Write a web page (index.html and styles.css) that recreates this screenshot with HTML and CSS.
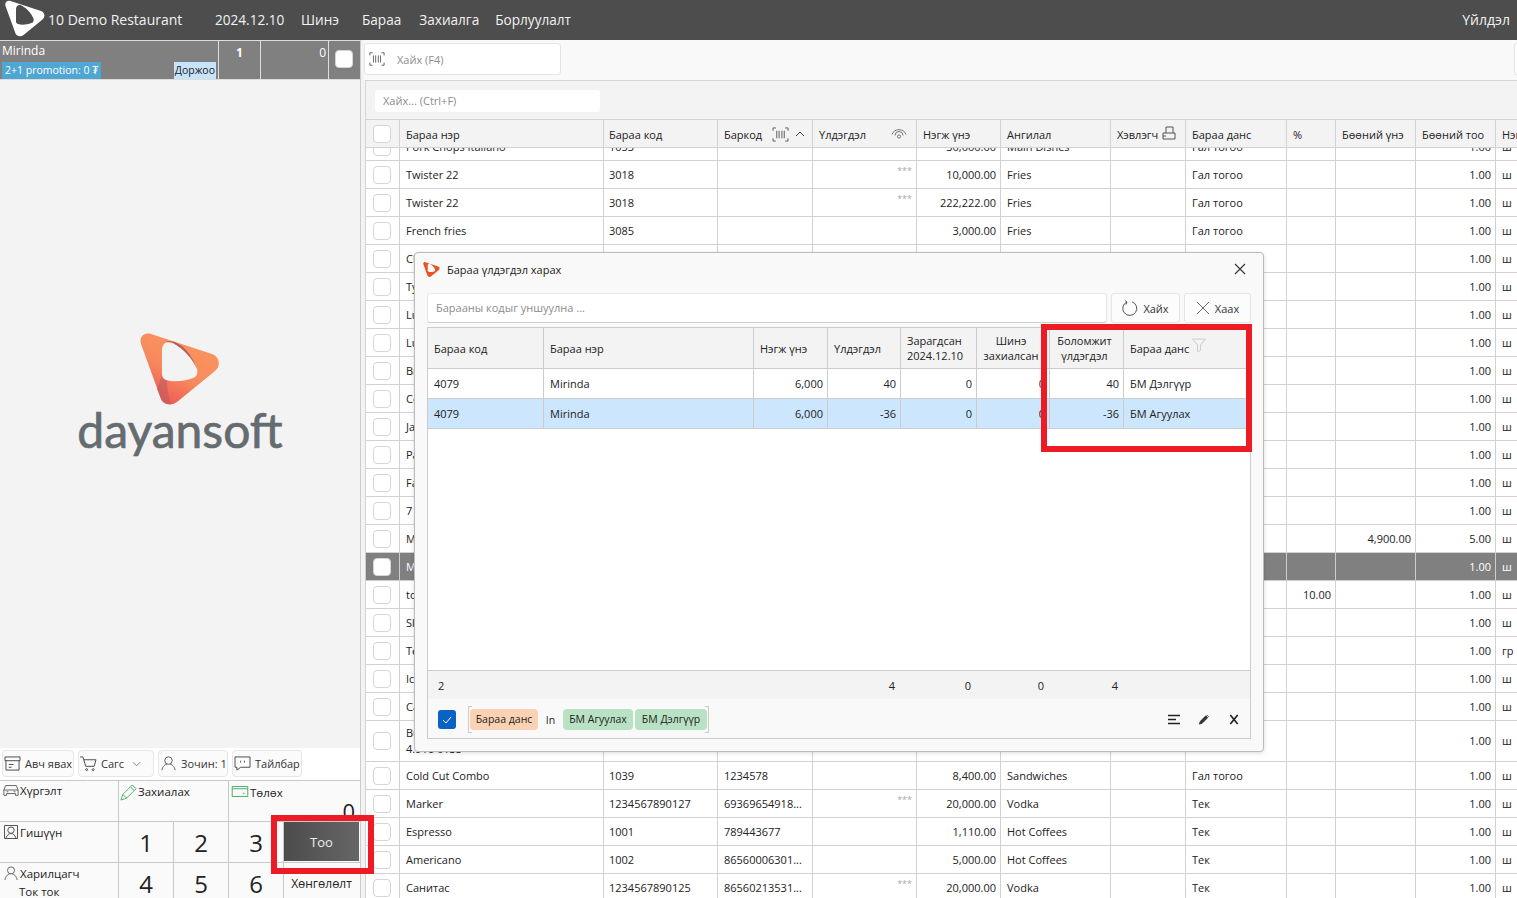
FILE: index.html

```html
<!DOCTYPE html>
<html lang="mn">
<head>
  <meta charset="UTF-8" />
  <meta name="viewport" content="width=device-width, initial-scale=1.0" />
  <title>Dayansoft POS</title>
  <link rel="stylesheet" href="styles.css">
</head>
<body>
  <svg class="defs" width="0" height="0">
    <symbol id="brand" viewBox="0 0 80 72">
      <path fill-rule="evenodd" d="M1 11C-1 4 4-1 11 1L72 21C80 24 81 33 75 38L37 69C32 73 24 72 21 66ZM22 17C22 11 27 7 33 10C44 16 53 26 57 36C58 40 57 44 53 45C43 49 32 49 26 47C23 46 22 44 22 42Z"/>
    </symbol>
    <symbol id="barcode" viewBox="0 0 18 16">
      <path d="M4 1H1V4M14 1H17V4M4 15H1V12M14 15H17V12M5 4V12M7.5 4V12M10.5 4V12M13 4V12" fill="none" stroke="currentColor"/>
    </symbol>
  </svg>

  <header class="topbar">
    <svg class="top-logo"><use href="#brand"/></svg>
    <span class="rest-name">10 Demo Restaurant</span>
    <span class="top-date">2024.12.10</span>
    <nav class="top-nav">
      <a class="n1">Шинэ</a>
      <a class="n2">Бараа</a>
      <a class="n3">Захиалга</a>
      <a>Борлуулалт</a>
    </nav>
    <span class="top-action">Үйлдэл</span>
  </header>

  <div class="app">
    <aside class="left">
      <div class="order-row">
        <div class="order-name">
          <div class="order-title">Mirinda</div>
          <div class="order-tags">
            <span class="promo">2+1 promotion: 0 ₮</span>
            <span class="waiter">Доржоо</span>
          </div>
        </div>
        <div class="order-qty">1</div>
        <div class="order-sum">0</div>
        <div class="order-check"><span class="check"></span></div>
      </div>

      <div class="brand-area">
        <svg class="brand-mark" viewBox="0 0 80 72">
          <defs>
            <linearGradient id="brandFill" x1="0.7" y1="0.1" x2="0.2" y2="0.9">
              <stop offset="0" stop-color="#fa9460"/>
              <stop offset="0.55" stop-color="#f78a5c"/>
              <stop offset="1" stop-color="#ee5a58"/>
            </linearGradient>
          </defs>
          <use href="#brand" fill="url(#brandFill)"/>
          <path d="M25 9C38 5 51 19 57 36C52 25 44 16 33 10C30 9 27 9 25 9Z" fill="#a94d58" opacity=".8"/>
          <path d="M22 42C23 46 25 47 27 47C27 55 28 62 31 71C26 72 22 70 21 66L17 56Z" fill="#b95a5c" opacity=".55"/>
        </svg>
        <div class="brand-text">dayansoft</div>
      </div>

      <div class="action-row">
        <button class="act a1"><svg viewBox="0 0 18 16"><path d="M1 1H17V5H1ZM2 5V15H16V5M5 9H10M5 12H8" fill="none" stroke="currentColor"/></svg>Авч явах</button>
        <button class="act a2"><svg viewBox="0 0 18 16"><path d="M0 1H3L6 11H15L17 4H4M7 13.5A1 1 0 1 0 7 15.5 1 1 0 1 0 7 13.5M14 13.5A1 1 0 1 0 14 15.5 1 1 0 1 0 14 13.5" fill="none" stroke="currentColor"/></svg>Сагс<svg class="caret" viewBox="0 0 10 6"><path d="M1 1L5 5L9 1" fill="none" stroke="#777"/></svg></button>
        <button class="act a3"><svg viewBox="0 0 18 18"><path d="M9 1A4.5 4.5 0 1 0 9 10 4.5 4.5 0 1 0 9 1M1 17C2 12 5 10 7 10M17 17C16 12 13 10 11 10" fill="none" stroke="currentColor"/></svg>Зочин: 1</button>
        <button class="act a4"><svg viewBox="0 0 18 16"><path d="M1 1H17V12H7L3 15V12H1Z" fill="none" stroke="currentColor"/><path d="M7 5V7M11 5V7" stroke="currentColor"/></svg>Тайлбар</button>
      </div>

      <div class="keypad">
        <div class="key k-side k-delivery"><svg viewBox="0 0 18 14"><path d="M1 13V7L3 2H15L17 7V13H14V11H4V13ZM1 7H17M4 9H6M12 9H14" fill="none" stroke="#555"/></svg>Хүргэлт</div>
        <div class="key k-wide"><svg viewBox="0 0 18 18"><path d="M1 17L3 11L13 1L17 5L7 15ZM3 11L7 15M11 3L15 7" fill="none" stroke="#4caf6d"/></svg>Захиалах</div>
        <div class="key k-pay"><svg viewBox="0 0 18 12"><path d="M.5.5H17.5V11.5H.5ZM.5 3H17.5M12 8H14" fill="none" stroke="#3fa45f"/></svg>Төлөх<span class="display">0</span></div>
        <div class="key k-side k-member"><svg viewBox="0 0 14 14"><path d="M.5.5H13.5V13.5H.5ZM7 2A3.2 3.2 0 1 0 7 8.4 3.2 3.2 0 1 0 7 2M2 13C3 10 5 8.5 7 8.5S11 10 12 13" fill="none" stroke="#555"/></svg>Гишүүн</div>
        <div class="key k-num">1</div>
        <div class="key k-num">2</div>
        <div class="key k-num">3</div>
        <div class="key k-fn"><span class="qty-btn">Тоо</span></div>
        <div class="key k-side k-client"><svg viewBox="0 0 16 16"><path d="M8 1A4 4 0 1 0 8 9 4 4 0 1 0 8 1M1 16C2 11 5 9 7 9M15 16C14 11 11 9 9 9" fill="none" stroke="#555"/></svg>Харилцагч<div class="client-name">Ток ток</div></div>
        <div class="key k-num">4</div>
        <div class="key k-num">5</div>
        <div class="key k-num">6</div>
        <div class="key k-fn k-disc">Хөнгөлөлт</div>
      </div>
    </aside>

    <main class="right">
      <div class="search-row">
        <div class="scan-box"><svg class="ic-scan"><use href="#barcode"/></svg><span>Хайх (F4)</span></div>
        <div class="stub-box"></div>
      </div>
      <div class="filter-row"><div class="filter-box">Хайх... (Ctrl+F)</div></div>
      <div class="grid-wrap">
        <table class="grid grid-head">
          <colgroup id="headCols"></colgroup>
          <tr>
            <th class="c-check"><span class="check"></span></th>
            <th>Бараа нэр</th>
            <th>Бараа код</th>
            <th>Баркод<svg class="ic-h ic-bar"><use href="#barcode"/></svg><svg class="ic-h ic-up" viewBox="0 0 10 6"><path d="M1 5L5 1L9 5" fill="none" stroke="currentColor"/></svg></th>
            <th>Үлдэгдэл<svg class="ic-h ic-eye" viewBox="0 0 16 12"><path d="M1 7A7.5 7.5 0 0 1 15 7M4 8A4 4 0 0 1 12 8" fill="none" stroke="#777"/><circle cx="8" cy="9" r="1.6" fill="none" stroke="#777"/></svg></th>
            <th>Нэгж үнэ</th>
            <th>Ангилал</th>
            <th>Хэвлэгч<svg class="ic-h ic-print" viewBox="0 0 14 14"><path d="M1 13V7H13V13ZM4 7V1H11V7M1 10H4" fill="none" stroke="#555"/></svg></th>
            <th>Бараа данс</th>
            <th>%</th>
            <th>Бөөний үнэ</th>
            <th>Бөөний тоо</th>
            <th>Нэгж</th>
          </tr>
        </table>
        <div class="grid-body">
          <table class="grid grid-rows">
            <colgroup id="bodyCols"></colgroup>
            <tbody id="rows"></tbody>
          </table>
        </div>
      </div>
    </main>
  </div>

  <section class="modal">
    <div class="modal-title">
      <svg class="modal-logo"><use href="#brand"/></svg>
      <span>Бараа үлдэгдэл харах</span>
      <svg class="modal-close" viewBox="0 0 12 12"><path d="M1 1L11 11M11 1L1 11" fill="none" stroke="#333" stroke-width="1.1"/></svg>
    </div>
    <div class="modal-tools">
      <div class="modal-input">Барааны кодыг уншуулна ...</div>
      <button class="tool-btn b-find"><svg viewBox="0 0 16 16"><path d="M5 2A7 7 0 1 0 10 1.8M5 2L3 .5M5 2L4 4.500" fill="none" stroke="#555"/></svg>Хайх</button>
      <button class="tool-btn b-close"><svg viewBox="0 0 14 14"><path d="M1 1L13 13M13 1L1 13" fill="none" stroke="#666"/></svg>Хаах</button>
    </div>
    <div class="stock">
      <div class="stock-head">
        <div class="s1">Бараа код</div>
        <div class="s2">Бараа нэр</div>
        <div class="s3">Нэгж үнэ</div>
        <div class="s4">Үлдэгдэл</div>
        <div class="s5">Зарагдсан<br>2024.12.10</div>
        <div class="s6 mid">Шинэ<br>захиалсан</div>
        <div class="s7 mid">Боломжит<br>үлдэгдэл</div>
        <div class="s8">Бараа данс<svg class="ic-funnel" viewBox="0 0 14 14"><path d="M.5 1H13.500L8.500 7V12.500L5.500 13.500V7Z" fill="none" stroke="#ccc"/></svg></div>
      </div>
      <div class="stock-row">
        <div class="s1">4079</div><div class="s2">Mirinda</div><div class="s3 num">6,000</div><div class="s4 num">40</div><div class="s5 num">0</div><div class="s6 num">0</div><div class="s7 num">40</div><div class="s8">БМ Дэлгүүр</div>
      </div>
      <div class="stock-row sel">
        <div class="s1">4079</div><div class="s2">Mirinda</div><div class="s3 num">6,000</div><div class="s4 num">-36</div><div class="s5 num">0</div><div class="s6 num">0</div><div class="s7 num">-36</div><div class="s8">БМ Агуулах</div>
      </div>
      <div class="stock-empty"></div>
      <div class="stock-foot">
        <div class="f1">2</div><div class="f2"></div><div class="f3"></div><div class="s4 num">4</div><div class="s5 num">0</div><div class="s6 num">0</div><div class="s7 num">4</div>
      </div>
      <div class="stock-filter">
        <span class="blue-check"><svg viewBox="0 0 10 8"><path d="M1 4L4 7L9 1" fill="none" stroke="#fff"/></svg></span>
        <div class="chips">
          <span class="chip orange">Бараа данс</span>
          <span class="chip-op">In</span>
          <span class="chip green g1">БМ Агуулах</span>
          <span class="chip green">БМ Дэлгүүр</span>
        </div>
        <div class="filter-tools">
          <svg viewBox="0 0 12 10"><path d="M0 1H12M0 5H8M0 9H12" stroke="#222" stroke-width="1.6"/></svg>
          <svg viewBox="0 0 12 12"><path d="M1 11L2 8L8 2L10 4L4 10ZM9 1L11 3" fill="#333" stroke="#333"/></svg>
          <svg viewBox="0 0 12 12"><path d="M2 1L10 11M10 1L2 11" stroke="#222" stroke-width="1.8"/></svg>
        </div>
      </div>
    </div>
  </section>

  <div class="red-box box-stock"></div>
  <div class="red-box box-qty"></div>

  <script>
    const widths = [34, 204, 114, 95, 104, 84, 110, 75, 101, 49, 80, 80, 60];
    ['headCols', 'bodyCols'].forEach(id => {
      const group = document.getElementById(id);
      widths.forEach(w => {
        const col = document.createElement('col');
        col.style.width = w + 'px';
        group.appendChild(col);
      });
    });

    // name, code, barcode, hidden stock, price, category, account, %, pack price, pack qty, unit
    const items = [
      ['Pork Chops Italiano', '1053', '', 0, '30,000.00', 'Main Dishes', 'Гал тогоо', '', '', '1.00', 'ш'],
      ['Twister 22', '3018', '', 1, '10,000.00', 'Fries', 'Гал тогоо', '', '', '1.00', 'ш'],
      ['Twister 22', '3018', '', 1, '222,222.00', 'Fries', 'Гал тогоо', '', '', '1.00', 'ш'],
      ['French fries', '3085', '', 0, '3,000.00', 'Fries', 'Гал тогоо', '', '', '1.00', 'ш'],
      ['Chicken', '', '', 0, '', '', '', '', '', '1.00', 'ш'],
      ['Tycoon', '', '', 0, '', '', '', '', '', '1.00', 'ш'],
      ['Lunch', '', '', 0, '', '', '', '', '', '1.00', 'ш'],
      ['Lunch', '', '', 0, '', '', '', '', '', '1.00', 'ш'],
      ['Bread', '', '', 0, '', '', '', '', '', '1.00', 'ш'],
      ['Coffee', '', '', 0, '', '', '', '', '', '1.00', 'ш'],
      ['Jam', '', '', 0, '', '', '', '', '', '1.00', 'ш'],
      ['Pasta', '', '', 0, '', '', '', '', '', '1.00', 'ш'],
      ['Fanta', '', '', 0, '', '', '', '', '', '1.00', 'ш'],
      ['7 Up', '', '', 0, '', '', '', '', '', '1.00', 'ш'],
      ['Mirinda', '', '', 0, '', '', '', '', '4,900.00', '5.00', 'ш'],
      ['Mirinda', '', '', 0, '', '', '', '', '', '1.00', 'ш', 'selected'],
      ['tost', '', '', 0, '', '', '', '10.00', '', '1.00', 'ш'],
      ['Sliders', '', '', 0, '', '', '', '', '', '1.00', 'ш'],
      ['Tea', '', '', 0, '', '', '', '', '', '1.00', 'гр'],
      ['Ice', '', '', 0, '', '', '', '', '', '1.00', 'ш'],
      ['Cake', '', '', 0, '', '', '', '', '', '1.00', 'ш'],
      ['Burger<br>4.916 0135', '', '', 0, '', '', '', '', '', '1.00', 'ш', 'tall'],
      ['Cold Cut Combo', '1039', '1234578', 0, '8,400.00', 'Sandwiches', 'Гал тогоо', '', '', '1.00', 'ш'],
      ['Marker', '1234567890127', '69369654918...', 1, '20,000.00', 'Vodka', 'Тек', '', '', '1.00', 'ш'],
      ['Espresso', '1001', '789443677', 0, '1,110.00', 'Hot Coffees', 'Тек', '', '', '1.00', 'ш'],
      ['Americano', '1002', '86560006301...', 0, '5,000.00', 'Hot Coffees', 'Тек', '', '', '1.00', 'ш'],
      ['Санитас', '1234567890125', '86560213531...', 1, '20,000.00', 'Vodka', 'Тек', '', '', '1.00', 'ш']
    ];

    const tbody = document.getElementById('rows');
    items.forEach(it => {
      const row = document.createElement('tr');
      if (it[11]) row.className = it[11];
      row.innerHTML = `<td class="c-check"><span class="check"></span></td>
        <td>${it[0]}</td><td>${it[1]}</td><td>${it[2]}</td>
        <td class="stars">${it[3] ? '***' : ''}</td>
        <td class="num">${it[4]}</td><td>${it[5]}</td><td></td><td>${it[6]}</td>
        <td class="num">${it[7]}</td><td class="num">${it[8]}</td><td class="num">${it[9]}</td><td>${it[10]}</td>`;
      tbody.appendChild(row);
    });
  </script>
</body>
</html>
```

FILE: styles.css

```css
* {
  box-sizing: border-box;
}
html, body {
  height: 100%;
}
body {
  margin: 0;
  height: 898px;
  overflow: hidden;
  position: relative;
  font-family: "Open Sans", "Noto Sans", sans-serif;
  font-size: 11px;
  color: #222;
  background-color: #fff;
}
.defs {
  position: absolute;
}
svg {
  display: block;
  flex: none;
}

/* top bar */
.topbar {
  height: 40px;
  background-color: #4d4d4d;
  color: #f2f2f2;
  display: flex;
  align-items: center;
  font-size: 13.6px;
  padding: 0 7px 2px 0;
}
.top-logo {
  width: 40px;
  height: 37px;
  margin: -1px 3px 0 5px;
  fill: #fff;
}
.rest-name {
  width: 167px;
  font-size: 14px;
}
.top-date {
  width: 86px;
}
.top-nav {
  display: flex;
}
.top-nav .n1 {
  margin-right: 23px;
}
.top-nav .n2 {
  margin-right: 18px;
}
.top-nav .n3 {
  margin-right: 16px;
}
.top-action {
  margin-left: auto;
  font-size: 14px;
}

.app {
  display: flex;
  height: 858px;
}

/* left panel */
.left {
  width: 361px;
  flex: none;
  display: flex;
  flex-direction: column;
  background-color: #f3f3f3;
  border-right: 1px solid #ccc;
}
.order-row {
  height: 40px;
  display: flex;
  background-color: #808080;
  color: #fff;
  border-top: 1px solid #ddd;
  border-bottom: 1px solid #ddd;
}
.order-name {
  width: 219px;
  border-right: 1px solid #ddd;
  padding: 2px 2px 0;
}
.order-title {
  font-size: 12px;
  line-height: 16px;
}
.order-tags {
  display: flex;
  justify-content: space-between;
  margin-top: 3px;
}
.promo {
  background-color: #4fa6d3;
  padding: 0 3px;
  line-height: 17px;
  font-size: 10.5px;
}
.waiter {
  background-color: #c8e4fb;
  color: #222;
  line-height: 17px;
  font-size: 10.5px;
  padding: 0 1px;
}
.order-qty {
  width: 42px;
  border-right: 1px solid #ddd;
  text-align: center;
  font-weight: bold;
  font-size: 12px;
  padding-top: 3px;
}
.order-sum {
  width: 68px;
  border-right: 1px solid #ddd;
  text-align: right;
  padding: 3px 2px 0;
  font-size: 12px;
}
.order-check {
  padding: 9px 0 0 6px;
}
.check {
  display: block;
  width: 18px;
  height: 18px;
  background-color: #fff;
  border: 1px solid #d5d5d5;
  border-radius: 4px;
}
.brand-area {
  flex: 1;
  padding-top: 253px;
  display: flex;
  flex-direction: column;
  align-items: center;
}
.brand-mark {
  width: 80px;
  height: 72px;
}
.brand-text {
  font-family: "Lato", "Open Sans", sans-serif;
  font-size: 48px;
  line-height: 50px;
  color: #656c70;
  -webkit-text-stroke: .7px #656c70;
}
.action-row {
  height: 32px;
  display: flex;
  gap: 4px;
  padding: 2px 2px 0;
  background-color: #fff;
}
.act {
  height: 27px;
  display: flex;
  align-items: center;
  gap: 4px;
  padding: 0 0 0 1px;
  font: inherit;
  color: #333;
  white-space: nowrap;
  background-color: #fbfbfb;
  border: 1px solid #e6e6e6;
  border-radius: 4px;
}
.act svg {
  width: 17px;
  height: 15px;
  color: #444;
}
.act .caret {
  width: 9px;
  height: 6px;
  margin-left: 4px;
}
.a1 { width: 72px; }
.a2 { width: 76px; }
.a3 { width: 70px; }
.a4 { width: 70px; }

.keypad {
  height: 118px;
  display: grid;
  grid-template-columns: 119px 55px 55px 55px 76px;
  grid-template-rows: 41px 41px 36px;
  background-color: #fafafa;
  border-top: 1px solid #c8c8c8;
  overflow: hidden;
}
.key {
  border-right: 1px solid #c8c8c8;
  border-bottom: 1px solid #c8c8c8;
  font-size: 11.5px;
  position: relative;
}
.k-side svg, .k-wide svg, .k-pay svg {
  float: left;
  margin-right: 1px;
}
.k-side {
  padding: 3px 3px 0;
}
.k-delivery {
  padding-top: 2px;
}
.k-side svg {
  width: 16px;
  height: 14px;
}
.k-wide {
  grid-column: span 2;
  padding: 3px 1px 0;
}
.k-wide svg {
  width: 17px;
  height: 17px;
}
.k-pay {
  grid-column: span 2;
  padding: 4px 2px 0;
  border-right: 0;
}
.k-pay svg {
  width: 18px;
  height: 11px;
  margin-top: 1px;
}
.display {
  position: absolute;
  right: 5px;
  bottom: -2px;
  font-size: 22px;
  line-height: 24px;
}
.k-num {
  font-size: 24px;
  line-height: 24px;
  display: flex;
  justify-content: center;
  padding-top: 9px;
}
.k-fn {
  border-right: 0;
  padding: 0 1px 0 0;
}
.qty-btn {
  display: flex;
  align-items: center;
  justify-content: center;
  height: 39px;
  color: #eee;
  font-size: 13px;
  background: linear-gradient(90deg, #4c4c4c, #666);
}
.k-disc {
  text-align: center;
  font-size: 12px;
  padding-top: 12px;
}
.client-name {
  margin: 3px 0 0 16px;
}

/* right panel */
.right {
  flex: 1;
  min-width: 0;
  display: flex;
  flex-direction: column;
  padding-left: 4px;
  background-color: #f3f3f3;
}
.search-row {
  height: 40px;
  display: flex;
  justify-content: space-between;
  padding-top: 3px;
  margin-left: -1px;
  background-color: #f9f9f9;
}
.scan-box {
  width: 197px;
  height: 32px;
  display: flex;
  align-items: center;
  gap: 12px;
  padding-left: 4px;
  color: #8c8c8c;
  background-color: #fff;
  border: 1px solid #e5e5e5;
  border-radius: 3px;
}
.ic-scan {
  width: 16px;
  height: 16px;
  color: #555;
}
.stub-box {
  width: 3px;
  height: 32px;
  background-color: #fff;
  border: 1px solid #e5e5e5;
  border-right: 0;
  border-radius: 3px 0 0 3px;
}
.filter-row {
  height: 39px;
  padding: 9px 0 0 9px;
  border-top: 1px solid #d5d5d5;
  border-left: 1px solid #d5d5d5;
}
.filter-box {
  width: 225px;
  height: 22px;
  line-height: 22px;
  padding-left: 8px;
  color: #8c8c8c;
  background-color: #fff;
  border-radius: 3px;
}
.grid-wrap {
  flex: 1;
  min-height: 0;
  overflow: hidden;
  display: flex;
  flex-direction: column;
  background-color: #fff;
}
.grid {
  width: 1151px;
  table-layout: fixed;
  border-collapse: collapse;
}
.grid th, .grid td {
  border: 1px solid #d2d2d2;
  padding: 0 4px 0 6px;
  text-align: left;
  font-weight: normal;
  font-size: 11px;
  white-space: nowrap;
  overflow: hidden;
}
.grid th:nth-child(3), .grid td:nth-child(3) {
  padding-left: 5px;
}
.grid-head {
  flex: none;
  position: relative;
  z-index: 1;
}
.grid-head th {
  height: 28px;
  padding-top: 2px;
  background-color: #f3f3f3;
  position: relative;
}
.grid-body {
  flex: 1;
  min-height: 0;
  overflow: hidden;
}
.grid-rows {
  margin-top: -16px;
}
.grid-rows td {
  height: 28px;
}
.grid .c-check {
  padding: 0 0 0 7px;
}
.grid .num {
  text-align: right;
}
.grid .stars {
  text-align: right;
  vertical-align: top;
  color: #aaa;
  font-size: 9px;
  padding-top: 3px;
}
.grid-rows .tall td {
  height: 41px;
  line-height: 16px;
}
.grid-rows .selected td {
  background-color: #808080;
  color: #fff;
  border-color: #ccc;
}
.ic-h {
  position: absolute;
  top: 7px;
}
.ic-bar {
  left: 54px;
  width: 17px;
  height: 15px;
  color: #555;
}
.ic-up {
  left: 77px;
  top: 11px;
  width: 10px;
  height: 6px;
  color: #444;
}
.ic-eye {
  left: 78px;
  width: 16px;
  height: 13px;
}
.ic-print {
  left: 51px;
  top: 6px;
  width: 14px;
  height: 14px;
}

/* modal */
.modal {
  position: absolute;
  left: 414px;
  top: 252px;
  width: 850px;
  height: 500px;
  display: flex;
  flex-direction: column;
  padding: 0 12px 12px;
  background-color: #f9f9f9;
  border: 1px solid #bbb;
  border-radius: 4px;
  box-shadow: 0 1px 4px rgba(0, 0, 0, .15);
  font-size: 11px;
}
.modal-title {
  height: 40px;
  flex: none;
  display: flex;
  align-items: center;
  gap: 7px;
  margin-left: -4px;
  padding-bottom: 8px;
}
.modal-logo {
  width: 17px;
  height: 15px;
  fill: #e9531f;
}
.modal-close {
  width: 12px;
  height: 12px;
  margin-left: auto;
  margin-right: 5px;
}
.modal-tools {
  flex: none;
  display: flex;
  gap: 4px;
  height: 30px;
}
.modal-input {
  flex: 1;
  line-height: 28px;
  padding-left: 8px;
  color: #8c8c8c;
  background-color: #fff;
  border: 1px solid #e8e8e8;
  border-bottom-color: #ccc;
  border-radius: 3px;
}
.tool-btn {
  display: flex;
  align-items: center;
  justify-content: center;
  gap: 5px;
  font: inherit;
  color: #333;
  background-color: #fcfcfc;
  border: 1px solid #e5e5e5;
  border-radius: 3px;
}
.b-find { width: 69px; }
.b-close { width: 67px; }
.tool-btn svg {
  width: 16px;
  height: 16px;
}
.b-close svg {
  width: 14px;
  height: 14px;
}
.stock {
  flex: 1;
  min-height: 0;
  display: flex;
  flex-direction: column;
  margin-top: 4px;
  border: 1px solid #ccc;
}
.stock-head, .stock-row, .stock-foot {
  flex: none;
  display: flex;
}
.stock-head {
  height: 41px;
  background-color: #f3f3f3;
  border-bottom: 1px solid #ccc;
}
.stock-head > div {
  display: flex;
  align-items: center;
  line-height: 15px;
  border-right: 1px solid #ccc;
  padding: 0 6px;
}
.stock-head .mid {
  text-align: center;
  justify-content: center;
  padding: 0 4px 0 0;
}
.stock-row {
  height: 30px;
  background-color: #fff;
  border-bottom: 1px solid #ccc;
}
.stock-row > div {
  display: flex;
  align-items: center;
  border-right: 1px solid #ccc;
  padding: 0 6px;
}
.stock .num {
  justify-content: flex-end;
  padding: 0 4px;
}
.stock-row.sel {
  background-color: #cce6fd;
}
.s1 { width: 116px; }
.s2 { width: 210px; }
.s3 { width: 74px; }
.s4 { width: 73px; }
.s5 { width: 76px; }
.s6 { width: 73px; }
.s7 { width: 74px; }
.s8 { width: 124px; }
.ic-funnel {
  width: 14px;
  height: 14px;
  margin: -6px 0 0 3px;
}
.stock-empty {
  flex: 1;
  background-color: #fff;
}
.stock-foot {
  height: 29px;
  align-items: center;
  background-color: #f3f3f3;
  border-top: 1px solid #ccc;
}
.stock-foot > div {
  display: flex;
}
.stock .stock-foot .num {
  padding-right: 6px;
}
.f1 {
  width: 116px;
  padding-left: 10px;
}
.f2 { width: 210px; }
.f3 { width: 74px; }
.stock-filter {
  flex: none;
  height: 39px;
  display: flex;
  align-items: center;
  padding: 2px 0 0 10px;
  background-color: #f9f9f9;
}
.blue-check {
  width: 18px;
  height: 19px;
  display: flex;
  align-items: center;
  justify-content: center;
  background-color: #0a62c4;
  border-radius: 3px;
}
.blue-check svg {
  width: 10px;
  height: 8px;
}
.chips {
  position: relative;
  display: flex;
  align-items: center;
  margin-left: 12px;
  height: 27px;
  padding: 0 2px;
}
.chips::before, .chips::after {
  content: "";
  position: absolute;
  top: 0;
  bottom: 0;
  width: 3px;
  border: 1px solid #ccc;
}
.chips::before {
  left: 0;
  border-right: 0;
}
.chips::after {
  right: 0;
  border-left: 0;
}
.chip {
  height: 21px;
  line-height: 21px;
  border-radius: 4px;
  font-size: 10.5px;
  text-align: center;
}
.orange {
  width: 68px;
  background-color: #fbd3b4;
}
.green {
  width: 72px;
  background-color: #b9e2c5;
}
.g1 {
  width: 70px;
  margin-right: 2px;
}
.chip-op {
  width: 25px;
  text-align: center;
  font-size: 10.500px;
}
.filter-tools {
  margin-left: auto;
  display: flex;
  gap: 18px;
  padding-right: 10px;
}
.filter-tools svg {
  width: 12px;
  height: 11px;
}

/* red markers drawn over the screenshot */
.red-box {
  position: absolute;
  border: 6px solid #ed1c24;
  pointer-events: none;
}
.box-stock {
  left: 1041px;
  top: 324px;
  width: 211px;
  height: 128px;
}
.box-qty {
  left: 271px;
  top: 815px;
  width: 103px;
  height: 59px;
}
```
